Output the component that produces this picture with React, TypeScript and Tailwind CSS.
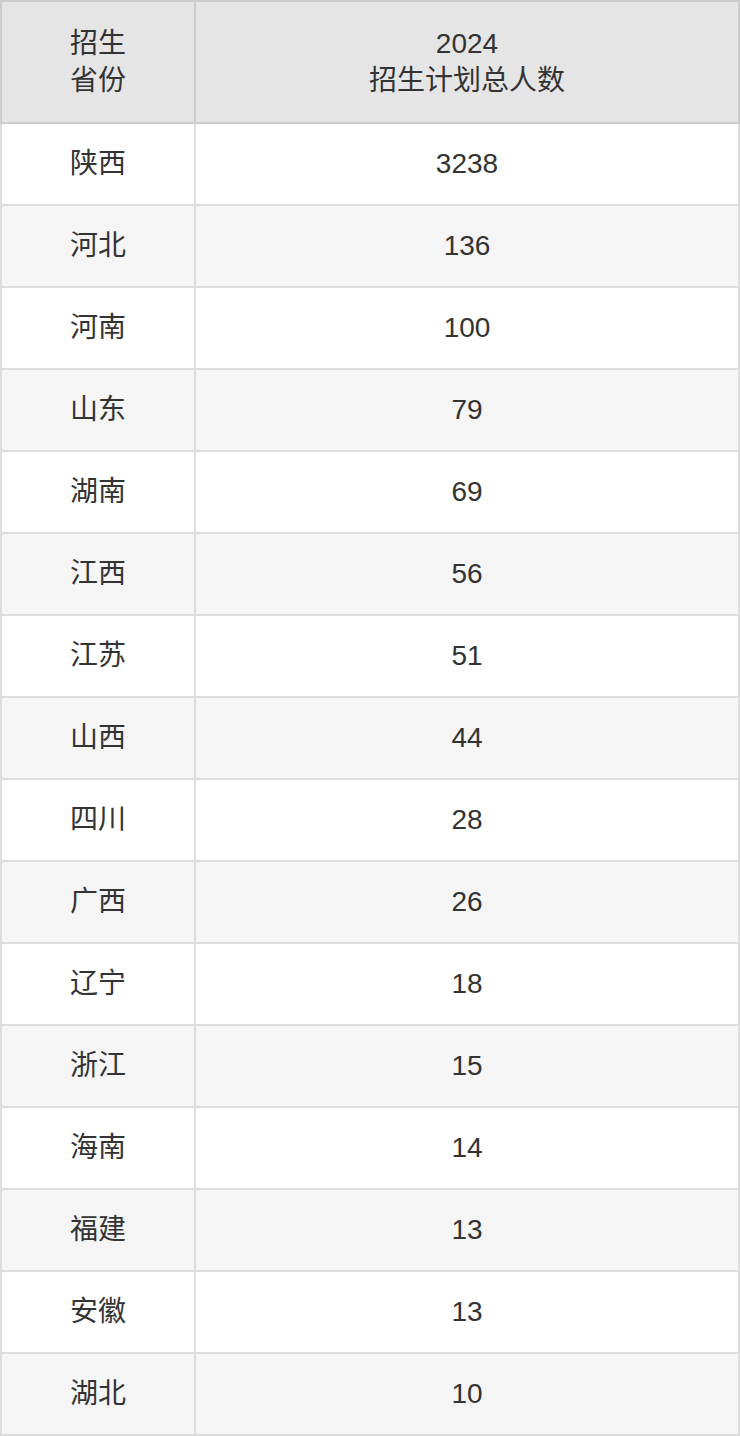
import React from 'react';

const rows = [
  ['陕西', '3238'],
  ['河北', '136'],
  ['河南', '100'],
  ['山东', '79'],
  ['湖南', '69'],
  ['江西', '56'],
  ['江苏', '51'],
  ['山西', '44'],
  ['四川', '28'],
  ['广西', '26'],
  ['辽宁', '18'],
  ['浙江', '15'],
  ['海南', '14'],
  ['福建', '13'],
  ['安徽', '13'],
  ['湖北', '10'],
];

export default function App() {
  return (
    <div
      className="w-[740px] bg-white text-[#333] text-[28px]"
      style={{ fontFamily: '"Liberation Sans", "Noto Sans CJK SC", sans-serif' }}
    >
      {/* 表头 */}
      <div className="flex h-[124px] border-2 border-[#ccc] bg-[#e5e5e5] leading-[37px]">
        <div className="w-[194px] border-r-2 border-[#ccc] flex items-center justify-center text-center">
          招生<br />省份
        </div>
        <div className="flex-1 flex items-center justify-center text-center">
          2024<br />招生计划总人数
        </div>
      </div>
      {rows.map(([prov, num], i) => (
        <div
          key={prov + i}
          className={`flex h-[82px] border-x-2 border-b-2 border-[#ddd] ${i % 2 === 1 ? 'bg-[#f5f5f5]' : 'bg-white'}`}
        >
          <div className="w-[194px] border-r-2 border-[#ddd] flex items-center justify-center">{prov}</div>
          <div className="flex-1 flex items-center justify-center">{num}</div>
        </div>
      ))}
    </div>
  );
}
